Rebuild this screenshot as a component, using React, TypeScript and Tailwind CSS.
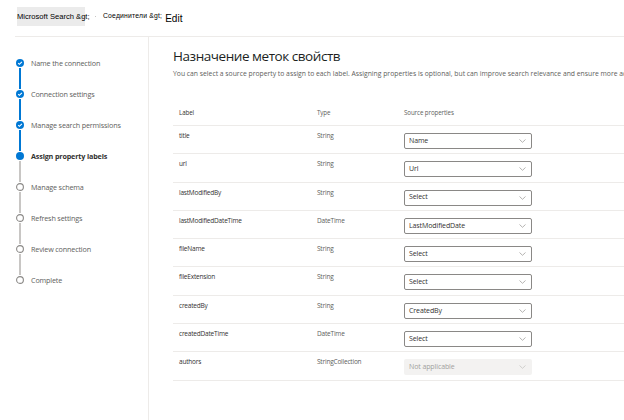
import type { ReactNode } from 'react';

type StepState = 'done' | 'current' | 'todo';

const steps: { label: string; state: StepState }[] = [
  { label: 'Name the connection', state: 'done' },
  { label: 'Connection settings', state: 'done' },
  { label: 'Manage search permissions', state: 'done' },
  { label: 'Assign property labels', state: 'current' },
  { label: 'Manage schema', state: 'todo' },
  { label: 'Refresh settings', state: 'todo' },
  { label: 'Review connection', state: 'todo' },
  { label: 'Complete', state: 'todo' },
];

const rows: { label: string; type: string; source: string; disabled?: boolean }[] = [
  { label: 'title', type: 'String', source: 'Name' },
  { label: 'url', type: 'String', source: 'Url' },
  { label: 'lastModifiedBy', type: 'String', source: 'Select' },
  { label: 'lastModifiedDateTime', type: 'DateTime', source: 'LastModifiedDate' },
  { label: 'fileName', type: 'String', source: 'Select' },
  { label: 'fileExtension', type: 'String', source: 'Select' },
  { label: 'createdBy', type: 'String', source: 'CreatedBy' },
  { label: 'createdDateTime', type: 'DateTime', source: 'Select' },
  { label: 'authors', type: 'StringCollection', source: 'Not applicable', disabled: true },
];

function StepIcon({ state }: { state: StepState }) {
  if (state === 'done') {
    return (
      <svg width="8" height="8" viewBox="0 0 8 8" className="shrink-0">
        <circle cx="4" cy="4" r="4" fill="#0078d4" />
        <path d="M2.2 4.1 L3.4 5.3 L5.9 2.8" fill="none" stroke="#fff" strokeWidth="1.1" />
      </svg>
    );
  }
  if (state === 'current') {
    return (
      <svg width="8" height="8" viewBox="0 0 8 8" className="shrink-0">
        <circle cx="4" cy="4" r="4" fill="#0078d4" />
      </svg>
    );
  }
  return (
    <svg width="8" height="8" viewBox="0 0 8 8" className="shrink-0">
      <circle cx="4" cy="4" r="3.4" fill="#fff" stroke="#8a8886" strokeWidth="1.1" />
    </svg>
  );
}

function Chevron({ color }: { color: string }) {
  return (
    <svg width="7" height="4" viewBox="0 0 7 4" className="shrink-0">
      <path d="M0.5 0.5 L3.5 3.3 L6.5 0.5" fill="none" stroke={color} strokeWidth="0.8" />
    </svg>
  );
}

function Dropdown({ value, disabled }: { value: string; disabled?: boolean }) {
  if (disabled) {
    return (
      <div className="flex h-[16px] w-[128px] items-center justify-between rounded-[2px] bg-[#f3f2f1] pl-[5px] pr-[6px] text-[7px] tracking-[-0.1px] text-[#a19f9d]">
        <span>{value}</span>
        <Chevron color="#c8c6c4" />
      </div>
    );
  }
  return (
    <div className="flex h-[16px] w-[128px] items-center justify-between rounded-[2px] border border-[#8a8886] pl-[4px] pr-[5px] text-[7px] tracking-[-0.1px] text-[#323130]">
      <span>{value}</span>
      <Chevron color="#a19f9d" />
    </div>
  );
}

function Cell({ w, children, className = '' }: { w: string; children: ReactNode; className?: string }) {
  return <div className={`${w} shrink-0 ${className}`}>{children}</div>;
}

export default function App() {
  return (
    <div className="h-[420px] w-full overflow-hidden bg-white font-['Open_Sans','Noto_Sans',sans-serif] text-[#323130]">
      {/* ── Breadcrumb ─────────────────────────────────────────── */}
      <div className="ml-[15px] flex h-[37px] items-center border-b border-[#edebe9] pb-[3px] font-['Liberation_Sans',Arial,sans-serif] text-black">
        <div className="ml-[2px] flex h-[19px] w-[68px] items-center bg-[#ebebeb]">
          <span className="whitespace-nowrap text-[7.6px]">Microsoft Search &amp;gt;</span>
        </div>
        <span className="ml-[10px] h-[1px] w-[1px] bg-[#c8c6c4]" />
        <span className="ml-[7px] whitespace-nowrap text-[6.8px] tracking-[0.2px]">Соединители &amp;gt;</span>
        <span className="ml-[3px] mt-[3px] text-[10px]">Edit</span>
      </div>

      <div className="flex h-[383px]">
        {/* ── Steps ──────────────────────────────────────────────── */}
        <div className="w-[149px] shrink-0 border-r border-[#edebe9] pl-[16px] pt-[22px]">
          {steps.map((s, i) => (
            <div key={s.label}>
              <div className="flex h-[8px] items-center">
                <StepIcon state={s.state} />
                <span
                  className={`ml-[7px] whitespace-nowrap text-[7.2px] leading-[8px] tracking-[-0.15px] ${
                    s.state === 'current' ? 'font-bold text-[#323130]' : 'text-[#605e5c]'
                  }`}
                >
                  {s.label}
                </span>
              </div>
              {i < steps.length - 1 && (
                <div
                  className={`my-[1px] ml-[3px] h-[21px] w-[2px] ${
                    i < 3 ? 'bg-[#0078d4]' : 'bg-[#c8c6c4]'
                  }`}
                />
              )}
            </div>
          ))}
        </div>

        {/* ── Main ───────────────────────────────────────────────── */}
        <div className="min-w-0 flex-1 overflow-hidden pl-[24px] pt-[9px]">
          <h1 className="whitespace-nowrap text-[13.5px] leading-[20px] tracking-[-0.45px] text-[#201f1e]">
            Назначение меток свойств
          </h1>
          <p className="mt-[3px] whitespace-nowrap text-[6.8px] leading-[10px] text-[#605e5c]">
            You can select a source property to assign to each label. Assigning properties is optional, but can improve search relevance and ensure more accurate search results.
          </p>

          <div className="mt-[24px]">
            <div className="flex h-[23px] items-center border-b border-[#edebe9] pb-[3px] text-[6.2px] tracking-[-0.1px] text-[#323130]">
              <Cell w="w-[144px]" className="pl-[6px]">Label</Cell>
              <Cell w="w-[87px]" className="text-[#605e5c]">Type</Cell>
              <Cell w="w-[128px]" className="text-[#605e5c]">Source properties</Cell>
            </div>
            {rows.map(r => (
              <div key={r.label} className="flex h-[28.3px] items-start border-b border-[#edebe9] pt-[5px]">
                <Cell w="w-[144px]" className="pl-[6px] pt-[1px] text-[6.5px] leading-[8px] tracking-[-0.2px] text-[#323130]">
                  {r.label}
                </Cell>
                <Cell w="w-[87px]" className="pt-[1px] text-[6.5px] leading-[8px] tracking-[-0.2px] text-[#605e5c]">
                  {r.type}
                </Cell>
                <div className="pt-[2px]">
                  <Dropdown value={r.source} disabled={r.disabled} />
                </div>
              </div>
            ))}
          </div>
        </div>
      </div>
    </div>
  );
}
